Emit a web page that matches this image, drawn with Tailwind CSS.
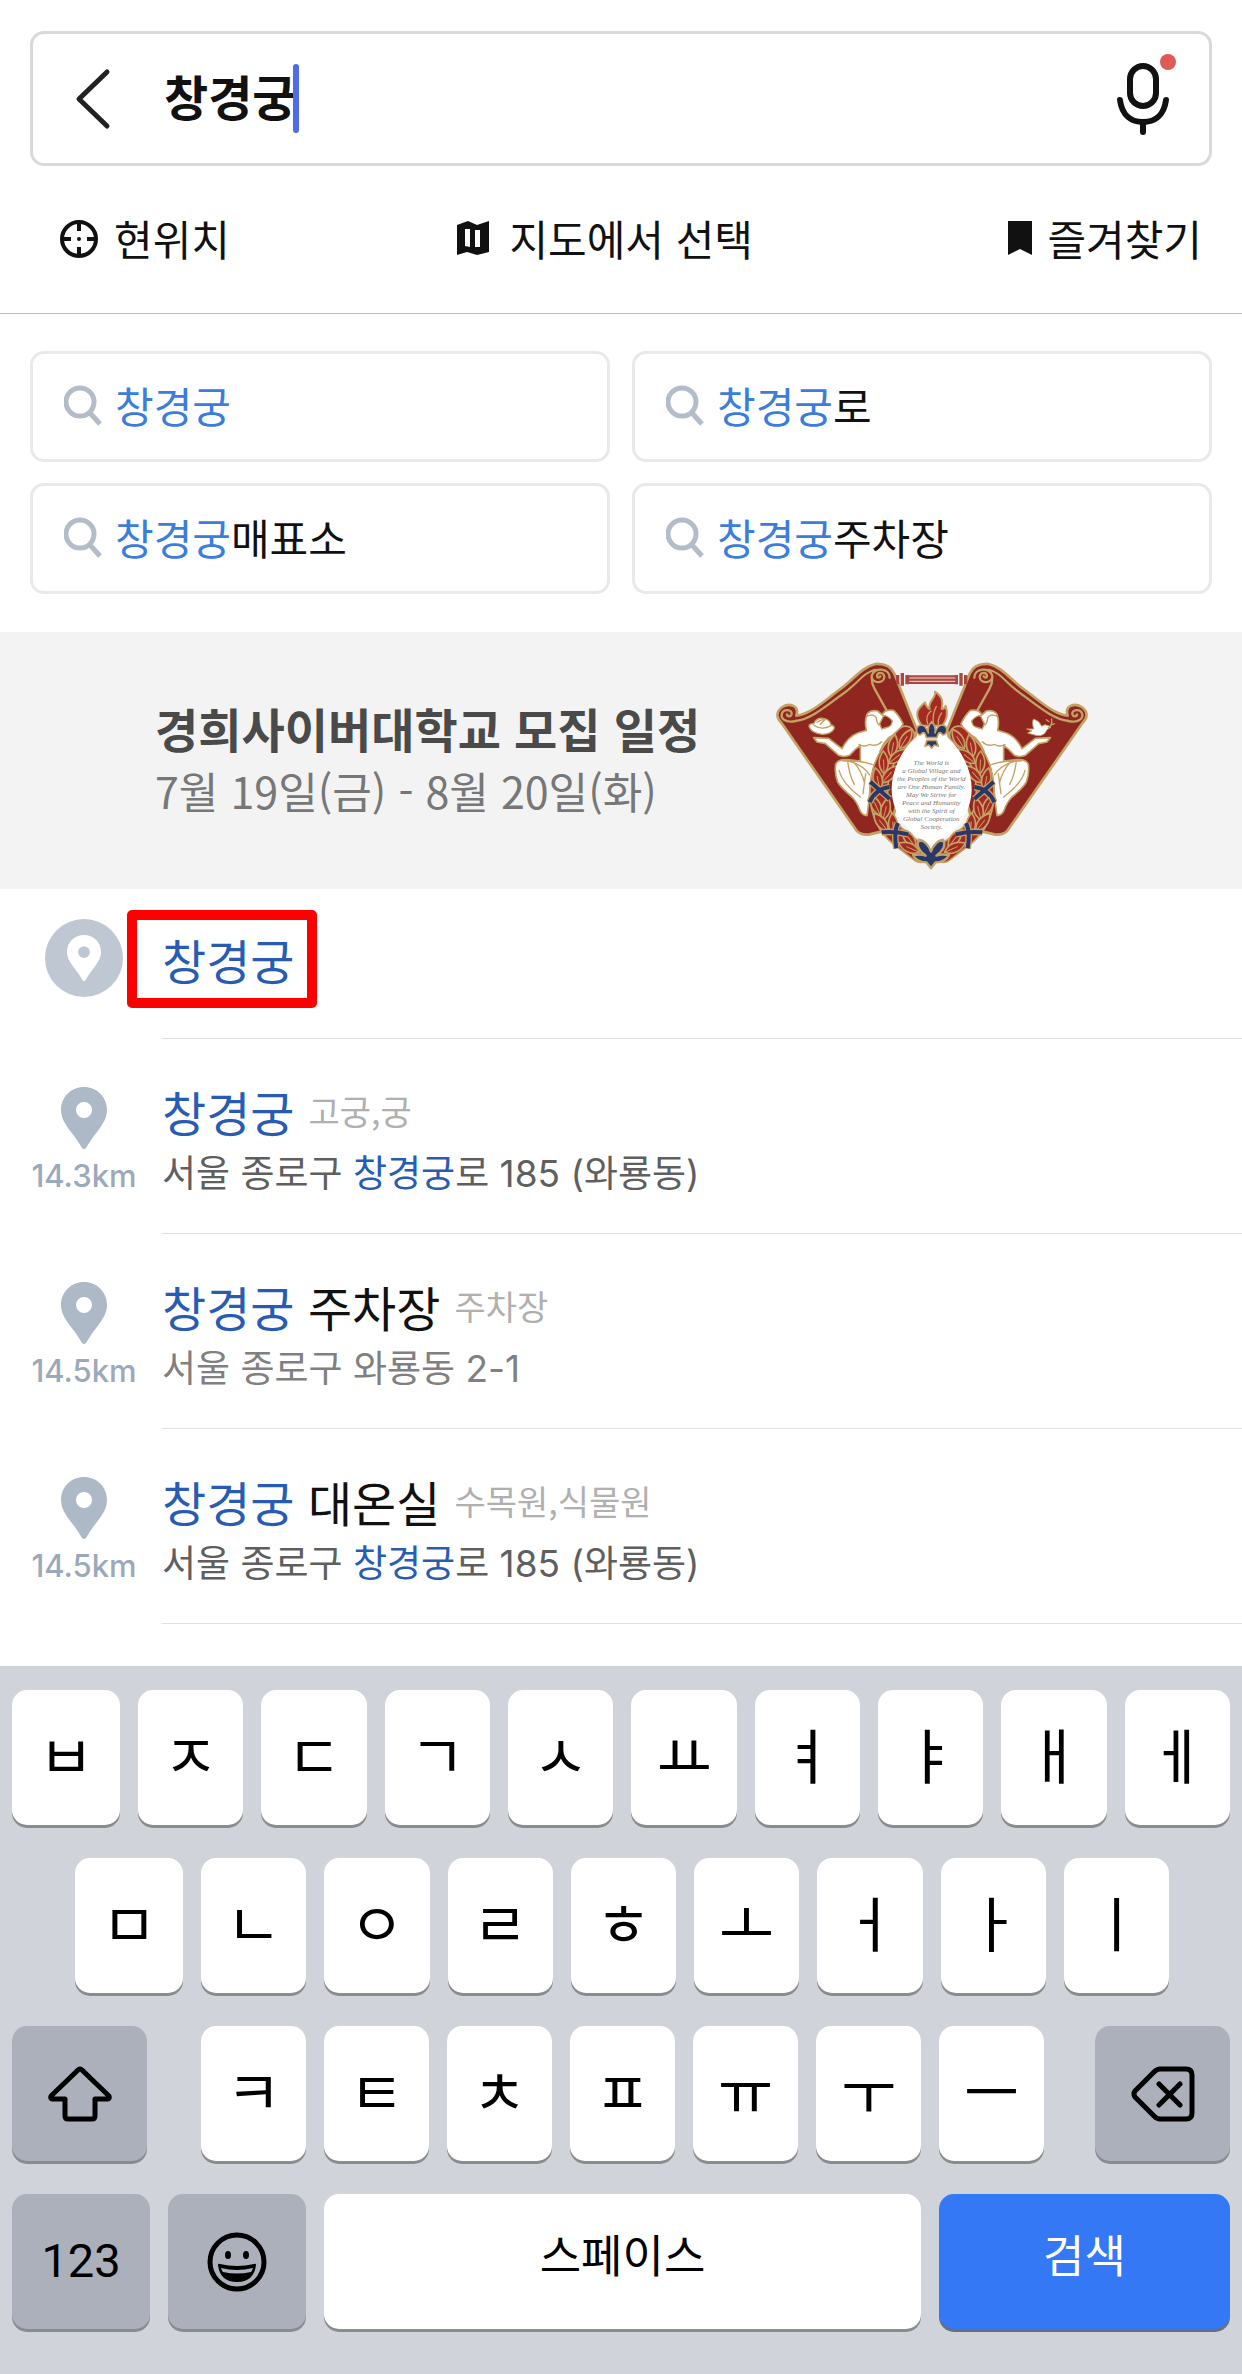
<!DOCTYPE html>
<html lang="ko">
<head>
  <meta charset="UTF-8">
  <meta name="viewport" content="width=device-width, initial-scale=1.0">
  <title>창경궁 - 장소 검색</title>
  <script src="https://cdn.jsdelivr.net/npm/@tailwindcss/browser@4"></script>
</head>
<body class="min-h-screen flex flex-col bg-white text-[#111] font-['Noto_Sans_CJK_KR','Noto_Sans',sans-serif]">

  <!-- Icons -->
  <svg class="hidden">
    <symbol id="search" viewBox="0 0 38 42">
      <circle cx="16" cy="18" r="14" fill="none" stroke="#b3bcc9" stroke-width="5" />
      <path d="M26 29l10 11" stroke="#b3bcc9" stroke-width="5" />
    </symbol>
    <symbol id="pin" viewBox="0 0 46 62">
      <path fill-rule="evenodd" d="M23 0C10 0 0 10 0 23c0 9 5 15 10 22 5 6 8 11 11 16q2 2 4 0c3-5 6-10 11-16 5-7 10-13 10-22C46 10 36 0 23 0zm0 15a8 8 0 1 1 0 16 8 8 0 0 1 0-16z" />
    </symbol>
  </svg>

  <header class="border-b border-[#bdbdbd]">
    <!-- Search box -->
    <div class="mx-[30px] mt-[31px] h-[135px] flex items-center rounded-[14px] border-3 border-[#d9d9d9] pl-10 pr-[29px]">
      <button aria-label="뒤로">
        <svg class="w-10 h-16" viewBox="0 0 40 64" fill="none" stroke="#222" stroke-width="5" stroke-linecap="round" stroke-linejoin="round"><path d="M34 5L6 32l28 27" /></svg>
      </button>
      <input type="text" aria-label="장소 검색" value="창경궁" class="ml-[51px] pb-2 field-sizing-content text-[48px] leading-[72px] font-bold outline-none">
      <span class="-ml-[3px] w-[6px] h-[69px] rounded-full bg-[#4f6be8]"></span>
      <button aria-label="음성 검색" class="ml-auto pb-[6px]">
        <svg class="w-[66px] h-[84px]" viewBox="0 0 66 84" fill="none" stroke="#111" stroke-width="6" stroke-linecap="round">
          <rect x="16" y="12" width="26" height="40" rx="13" />
          <path d="M6 46c2 16 12 22 23 22s21-6 23-22M29 68v10" />
          <circle cx="54" cy="8" r="8" fill="#e05a55" stroke="none" />
        </svg>
      </button>
    </div>

    <!-- Shortcuts -->
    <nav class="flex justify-between pl-[59px] pr-10 pt-[41px] pb-11 text-[42px] leading-[62px]">
      <button class="flex items-center gap-[15px]">
        <svg class="w-10 h-10" viewBox="0 0 40 40" fill="none" stroke="#111" stroke-width="4">
          <circle cx="20" cy="21" r="17" />
          <path d="M20 4v9M20 29v9M3 21h9M28 21h9" />
          <circle cx="20" cy="21" r="2" fill="#111" stroke="none" />
        </svg>
        현위치
      </button>
      <button class="mr-7 flex items-center gap-5">
        <svg class="w-8 h-[34px]" viewBox="0 0 32 34"><path fill="#111" fill-rule="evenodd" d="M0 4l11-4 9 4L32 0v31l-12 3-10-3-10 3zM8 8v17l5 1V8zM18 9v17l5 0V9z" /></svg>
        지도에서 선택
      </button>
      <button class="flex items-center gap-[15px]">
        <svg class="w-6 h-[34px]" viewBox="0 0 24 34"><path fill="#111" d="M0 0h24v34l-12-6-12 6z" /></svg>
        즐겨찾기
      </button>
    </nav>
  </header>

  <!-- Suggested keywords -->
  <div class="grid grid-cols-2 gap-x-[22px] gap-y-[21px] px-[30px] pt-[37px] pb-[38px] text-[42px] leading-[60px]">
    <button class="h-[111px] flex items-center gap-[13px] rounded-[14px] border-3 border-[#e9e9e9] pl-[31px] pb-[3px]">
      <svg class="w-[38px] h-[42px]"><use href="#search" /></svg>
      <span><span class="text-[#3b7ddd]">창경궁</span></span>
    </button>
    <button class="h-[111px] flex items-center gap-[13px] rounded-[14px] border-3 border-[#e9e9e9] pl-[31px] pb-[3px]">
      <svg class="w-[38px] h-[42px]"><use href="#search" /></svg>
      <span><span class="text-[#3b7ddd]">창경궁</span>로</span>
    </button>
    <button class="h-[111px] flex items-center gap-[13px] rounded-[14px] border-3 border-[#e9e9e9] pl-[31px] pb-[3px]">
      <svg class="w-[38px] h-[42px]"><use href="#search" /></svg>
      <span><span class="text-[#3b7ddd]">창경궁</span>매표소</span>
    </button>
    <button class="h-[111px] flex items-center gap-[13px] rounded-[14px] border-3 border-[#e9e9e9] pl-[31px] pb-[3px]">
      <svg class="w-[38px] h-[42px]"><use href="#search" /></svg>
      <span><span class="text-[#3b7ddd]">창경궁</span>주차장</span>
    </button>
  </div>

  <!-- Banner -->
  <a href="#" class="h-[257px] flex items-center justify-between bg-[#f3f3f3] pl-[155px] pr-[153px]">
    <div class="pb-[3px]">
      <p class="text-[47px] leading-[62px] font-bold text-[#4a4a4a]">경희사이버대학교 모집 일정</p>
      <p class="text-[43px] leading-[62px] text-[#777]">7월 19일(금) - 8월 20일(화)</p>
    </div>
    <svg class="mt-[10px] w-[314px] h-[210px]" viewBox="44 62 942 630" fill="none" stroke-linecap="round" stroke-linejoin="round">
      <defs>
        <g id="leaf"><path d="M0 34C-20 14-16-14 0-34 16-14 20 14 0 34z" fill="#a62a22" stroke="#c4a265" stroke-width="5" /><path d="M0 28V-8" stroke="#c4a265" stroke-width="3" /></g>
        <g id="wing">
          <path d="M62 246L288 570q14 16 40 12l60-14 82-298L402 100Q388 68 345 71C300 82 280 120 232 152 190 184 150 222 108 226 118 196 88 186 66 200 46 214 48 232 62 246z" fill="#8f261f" stroke="#c4a265" stroke-width="8" />
          <path d="M345 88C310 94 290 132 240 166 196 198 152 236 106 242 84 248 62 240 64 222 68 204 96 206 94 222 90 232 80 228 80 222M388 112C388 82 340 80 334 106 332 130 370 132 372 110 370 94 350 94 350 108 352 114 358 112 360 108M334 112q0 18 8 32l68 122" stroke="#c4a265" stroke-width="7" />
          <path d="M350 80C300 94 288 130 236 160 192 190 152 228 106 234" stroke="#8f261f" stroke-width="4" />
          <!-- seated figure -->
          <path d="M160 292l45 2 40 31q17-35 47-47l26-8q-6-30 2-48 10-14 32-10l14 12q6-18 34-14 16 15 28 40-8 20-23 30l-20 12q-17 18-25 38l-8 42q-7 28-22 58l-4 50-6 46q-15-1-22-18-8-23-23-38-35-30-43-45-10-25-6-53 6-16 36-14l38 4V315q-15 10-32 30-18 7-33 0l-40-35-25-5z" fill="#fff" stroke="#c4a265" stroke-width="5" />
          <path d="M370 226q14 0 26 16-2 14-12 18l-20 6-6-16z" fill="#8f261f" stroke="#c4a265" stroke-width="4" />
          <path d="M320 228q16-10 28 4 0 14 8 22M296 312q16 10 32 0 20 8 36-8M248 362q50-4 92 12M262 362q46 10 66 42M280 366q24 26 32 60M262 362q4 40 20 70M236 390q10 40 64 80M316 400l-8 60" stroke="#c4a265" stroke-width="4" />
          <!-- laurel -->
          <path d="M436 284Q360 350 356 440 350 540 420 594l60 46" stroke="#c4a265" stroke-width="58" />
          <path d="M436 284Q360 350 356 440 350 540 420 594l60 46" stroke="#a62a22" stroke-width="48" />
          <use href="#leaf" transform="translate(436 296) rotate(32)" />
          <use href="#leaf" transform="translate(398 316) rotate(10)" />
          <use href="#leaf" transform="translate(412 348) rotate(52)" />
          <use href="#leaf" transform="translate(370 366) rotate(-2)" />
          <use href="#leaf" transform="translate(388 402) rotate(42)" />
          <use href="#leaf" transform="translate(352 416) rotate(-12)" />
          <use href="#leaf" transform="translate(346 494) rotate(-24)" />
          <use href="#leaf" transform="translate(376 506) rotate(14)" />
          <use href="#leaf" transform="translate(362 546) rotate(-38)" />
          <use href="#leaf" transform="translate(398 552) rotate(-4)" />
          <use href="#leaf" transform="translate(446 594) rotate(-36)" />
          <use href="#leaf" transform="translate(446 622) rotate(-66)" />
          <path d="M330 424q24 22 58 52M388 440q-44 6-60 46M364 576q40-4 80 6M412 548q-12 30-4 76" stroke="#c4a265" stroke-width="20" stroke-linecap="butt" />
          <path d="M330 424q24 22 58 52M388 440q-44 6-60 46M364 576q40-4 80 6M412 548q-12 30-4 76" stroke="#2b3768" stroke-width="12" stroke-linecap="butt" />
        </g>
      </defs>
      <use href="#wing" />
      <use href="#wing" transform="translate(1030 0) scale(-1 1)" />
      <!-- globe and dove -->
      <path d="M146 258q0-8 14-8 8-18 28-16 20 2 24 20 10 2 10 10-8 18-36 18-34-4-40-24z" fill="#fff" stroke="#c4a265" stroke-width="4" />
      <path d="M160 254q24 18 52 2M170 246q10-10 24-8l-14 14" stroke="#c4a265" stroke-width="4" />
      <path d="M800 266l20 0q-6-22 0-30 18 6 24 22 8-8 20-2l8 4-12 8q-8 20-30 18l-28-8 12-6z" fill="#fff" stroke="#c4a265" stroke-width="3" />
      <path d="M864 262q12-4 10-26M874 254l8-4M866 244l-8-6" stroke="#c4a265" stroke-width="4" />
      <!-- rod -->
      <path d="M412 104v28M426 98v38M440 104v28M588 104v28M602 98v38M616 104v28" stroke="#a94740" stroke-width="10" stroke-linecap="butt" />
      <path d="M440 118h150" stroke="#a94740" stroke-width="26" stroke-linecap="butt" />
      <path d="M448 113h136M448 123h136" stroke="#f0dcda" stroke-width="3" />
      <!-- center -->
      <path d="M514 262C440 290 392 380 394 450 396 520 440 580 514 614 588 580 632 520 634 450 636 380 588 290 514 262z" fill="#fff" />
      <path d="M484 256C456 216 478 202 494 186 498 200 502 204 508 206 500 184 530 172 524 154 548 170 548 186 544 206 550 206 554 204 556 196 566 226 554 246 546 256z" fill="#a62a22" stroke="#c4a265" stroke-width="6" />
      <path d="M502 250q-8-24 10-38M520 252q-6-28 8-54M534 252q-2-20 10-34" stroke="#c4a265" stroke-width="4" />
      <path d="M514 244q14 16 10 34 8-24 22-24 18 4 12 22-8 14-16 2-8-6-12 14h-32q-4-20-12-14-8 12-16-2-6-18 12-22 14 0 22 24-4-18 10-34zM500 300h28l6 18-12-4-8 10-8-10-12 4z" fill="#2b3768" stroke="#c4a265" stroke-width="5" />
      <path d="M512 684l-14-18q-30 0-40-22 24-4 38 2-34-24-20-48 24 4 36 36 12-32 36-36 14 24-20 48 14-6 38-2-10 22-40 22z" fill="#2b3768" stroke="#c4a265" stroke-width="7" />
      <g fill="#777" font-family="'Liberation Serif', serif" font-style="italic" font-size="21" text-anchor="middle">
        <text x="513" y="373">The World is</text>
        <text x="513" y="397">a Global Village and</text>
        <text x="513" y="421">the Peoples of the World</text>
        <text x="513" y="445">are One Human Family.</text>
        <text x="513" y="469">May We Strive for</text>
        <text x="513" y="493">Peace and Humanity</text>
        <text x="513" y="517">with the Spirit of</text>
        <text x="513" y="541">Global Cooperation</text>
        <text x="513" y="565">Society.</text>
      </g>
    </svg>
  </a>

  <!-- Results -->
  <ul class="text-[37px] leading-[58px] text-[#5f5f5f]">
    <li class="flex">
      <div class="w-[162px] shrink-0 pl-[6px] pt-[30px] flex flex-col items-center">
        <span class="size-[78px] rounded-full bg-[#bfc7d3] flex items-center justify-center">
          <svg class="w-[34px] h-[46px] fill-white"><use href="#pin" /></svg>
        </span>
      </div>
      <div class="grow h-[150px] pt-10 border-b border-[#e0e0e0]">
        <a href="#" class="relative inline-block text-[48px] leading-[60px] text-[#285cb3]">창경궁
          <span class="absolute -left-[35px] -right-[23px] -top-[19px] h-[98px] border-10 border-[#ff0000] rounded-[5px]"></span>
        </a>
      </div>
    </li>
    <li class="flex">
      <div class="w-[162px] shrink-0 pl-[6px] pt-12 flex flex-col items-center">
        <svg class="w-[46px] h-[62px] fill-[#aeb9c8]"><use href="#pin" /></svg>
        <span class="mt-2 text-[31px] leading-[38px] font-medium text-[#9ca9ba] font-[Inter,sans-serif]">14.3km</span>
      </div>
      <div class="grow h-[195px] pt-[42px] border-b border-[#e0e0e0]">
        <h2 class="flex items-center gap-[14px] text-[48px] leading-[60px]"><a href="#"><span class="text-[#285cb3]">창경궁</span></a> <span class="text-[34px] text-[#b0b0b0]">고궁,궁</span></h2>
        <p class="mt-1 font-[Inter,'Noto_Sans_CJK_KR',sans-serif]">서울 종로구 <span class="text-[#285cb3]">창경궁</span>로 185 (와룡동)</p>
      </div>
    </li>
    <li class="flex">
      <div class="w-[162px] shrink-0 pl-[6px] pt-12 flex flex-col items-center">
        <svg class="w-[46px] h-[62px] fill-[#aeb9c8]"><use href="#pin" /></svg>
        <span class="mt-2 text-[31px] leading-[38px] font-medium text-[#9ca9ba] font-[Inter,sans-serif]">14.5km</span>
      </div>
      <div class="grow h-[195px] pt-[42px] border-b border-[#e0e0e0]">
        <h2 class="flex items-center gap-[14px] text-[48px] leading-[60px]"><a href="#" class="text-[#111]"><span class="text-[#285cb3]">창경궁</span> 주차장</a> <span class="text-[34px] text-[#b0b0b0]">주차장</span></h2>
        <p class="mt-1 text-[#808080] font-[Inter,'Noto_Sans_CJK_KR',sans-serif]">서울 종로구 와룡동 2-1</p>
      </div>
    </li>
    <li class="flex">
      <div class="w-[162px] shrink-0 pl-[6px] pt-12 flex flex-col items-center">
        <svg class="w-[46px] h-[62px] fill-[#aeb9c8]"><use href="#pin" /></svg>
        <span class="mt-2 text-[31px] leading-[38px] font-medium text-[#9ca9ba] font-[Inter,sans-serif]">14.5km</span>
      </div>
      <div class="grow h-[195px] pt-[42px] border-b border-[#e0e0e0]">
        <h2 class="flex items-center gap-[14px] text-[48px] leading-[60px]"><a href="#" class="text-[#111]"><span class="text-[#285cb3]">창경궁</span> 대온실</a> <span class="text-[34px] text-[#b0b0b0]">수목원,식물원</span></h2>
        <p class="mt-1 font-[Inter,'Noto_Sans_CJK_KR',sans-serif]">서울 종로구 <span class="text-[#285cb3]">창경궁</span>로 185 (와룡동)</p>
      </div>
    </li>
  </ul>

  <!-- Keyboard -->
  <div class="mt-auto flex flex-col gap-[33px] bg-[#d0d3d9] px-3 pt-6 pb-[45px] text-black">
    <div id="row1" class="flex gap-[18px] *:first:flex-none *:first:w-[108px]"></div>
    <div id="row2" class="flex gap-[18px] pl-[63px] pr-[61px] *:first:flex-none *:first:w-[108px]"></div>
    <div class="flex">
      <button aria-label="Shift" class="w-[135px] h-[135px] flex items-center justify-center rounded-[15px] bg-[#abb0ba] shadow-[0_3px_0_#898b8f]">
        <svg class="w-16 h-14" viewBox="0 0 64 56" fill="none" stroke="#000" stroke-width="5" stroke-linejoin="round"><path d="M30 4q2-2 4 0l27 26q1 3-2 3H47v17q0 3-3 3H20q-3 0-3-3V33H5q-3 0-2-3z" /></svg>
      </button>
      <div id="row3" class="grow ml-[54px] mr-[51px] flex gap-[18px]"></div>
      <button aria-label="지우기" class="w-[135px] h-[135px] flex items-center justify-center rounded-[15px] bg-[#abb0ba] shadow-[0_3px_0_#898b8f]">
        <svg class="w-16 h-14" viewBox="0 0 64 56" fill="none" stroke="#000" stroke-width="5" stroke-linecap="round" stroke-linejoin="round"><path d="M4 25L23 6q3-3 6-3h26q6 0 6 6v38q0 6-6 6H29q-3 0-6-3L4 31q-2-3 0-6zM28 18l21 21M49 18L28 39" /></svg>
      </button>
    </div>
    <div class="flex gap-[18px]">
      <button class="w-[138px] h-[135px] rounded-[15px] bg-[#abb0ba] text-[47px] font-[Roboto,sans-serif] shadow-[0_3px_0_#898b8f]">123</button>
      <button aria-label="이모지" class="w-[138px] h-[135px] flex items-center justify-center rounded-[15px] bg-[#abb0ba] shadow-[0_3px_0_#898b8f]">
        <svg class="size-[60px]" viewBox="0 0 60 60">
          <circle cx="30" cy="30" r="27" fill="none" stroke="#000" stroke-width="5" />
          <ellipse cx="21" cy="23" rx="3" ry="4" /><ellipse cx="39" cy="23" rx="3" ry="4" />
          <path fill-rule="evenodd" d="M11 33q0-2 2-1 17 4 34 0 2-1 2 1-2 17-19 17T11 33zM14 36q1 3 2 4 14 3 28 0 1-1 2-4-16 4-32 0z" />
        </svg>
      </button>
      <button class="grow h-[135px] rounded-[15px] bg-white pb-4 text-[45px] shadow-[0_3px_0_#898b8f]">스페이스</button>
      <button class="w-[291px] h-[135px] rounded-[15px] bg-[#3478f6] pb-4 text-[45px] text-white shadow-[0_3px_0_#6b6f78]">검색</button>
    </div>
  </div>

  <script>
    const rows = {
      row1: 'ㅂㅈㄷㄱㅅㅛㅕㅑㅐㅔ',
      row2: 'ㅁㄴㅇㄹㅎㅗㅓㅏㅣ',
      row3: 'ㅋㅌㅊㅍㅠㅜㅡ',
    };

    // Fill the letter rows
    Object.entries(rows).forEach(([id, letters]) => {
      const row = document.getElementById(id);
      [...letters].forEach(letter => {
        const key = document.createElement('button');
        key.className = 'flex-1 h-[135px] rounded-[15px] bg-white pb-[10px] text-[60px] leading-[80px] shadow-[0_3px_0_#898b8f]';
        key.textContent = letter;
        row.appendChild(key);
      });
    });
  </script>
</body>
</html>
